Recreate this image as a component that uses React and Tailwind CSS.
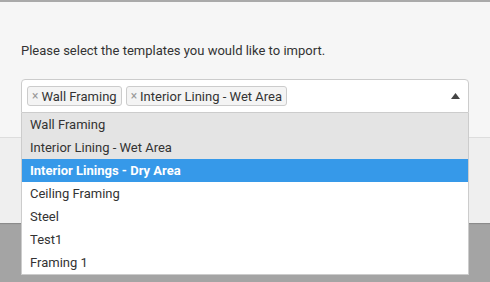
import React from "react";

const items = [
  { label: "Wall Framing", state: "selected" },
  { label: "Interior Lining - Wet Area", state: "selected" },
  { label: "Interior Linings - Dry Area", state: "active" },
  { label: "Ceiling Framing", state: "" },
  { label: "Steel", state: "" },
  { label: "Test1", state: "" },
  { label: "Framing 1", state: "" },
];

function Tag({ label }) {
  return (
    <span className="flex items-center h-[20px] pl-[4px] pr-[4px] gap-[3px] border border-[#cccccc] rounded-[3px] bg-[#f4f4f4] text-[13px] text-[#333333] leading-none">
      <span className="text-[#999999] text-[12px]">×</span>
      <span>{label}</span>
    </span>
  );
}

export default function App() {
  return (
    <div
      className="w-[490px] h-[282px] overflow-hidden bg-[#a4a4a4] flex flex-col"
      style={{ fontFamily: "Roboto, 'Liberation Sans', sans-serif" }}
    >
      <div className="border-t-2 border-[#aaaaaa] bg-[#f6f6f6] h-[137px] pt-[39px] pl-[21px] pr-[21px]">
        <p className="text-[13px] leading-[20px] text-[#333333]">
          Please select the templates you would like to import.
        </p>
        <div className="relative mt-[18px] w-[448px] z-10">
          <div className="h-[34px] border border-[#cccccc] rounded-t-[4px] bg-white flex items-center pl-[5px] pr-[8px] gap-[4px]">
            <Tag label="Wall Framing" />
            <Tag label="Interior Lining - Wet Area" />
            <div className="flex-1" />
            <svg width="9" height="6" viewBox="0 0 9 6">
              <path d="M0 6 L4.5 0 L9 6 Z" fill="#444444" />
            </svg>
          </div>
          <div className="absolute left-0 top-full w-full bg-white border border-t-0 border-[#cccccc]">
            {items.map((it) => (
              <div
                key={it.label}
                className={
                  "h-[23px] px-[8px] flex items-center text-[13px] " +
                  (it.state === "selected"
                    ? "bg-[#e4e4e4] text-[#333333]"
                    : it.state === "active"
                    ? "bg-[#3699e9] text-white font-bold"
                    : "bg-white text-[#333333]")
                }
              >
                {it.label}
              </div>
            ))}
          </div>
        </div>
      </div>
      <div className="border-t border-[#dddddd] bg-[#efefef] h-[86px] shadow-[0_1px_1px_rgba(0,0,0,0.15)]" />
    </div>
  );
}
